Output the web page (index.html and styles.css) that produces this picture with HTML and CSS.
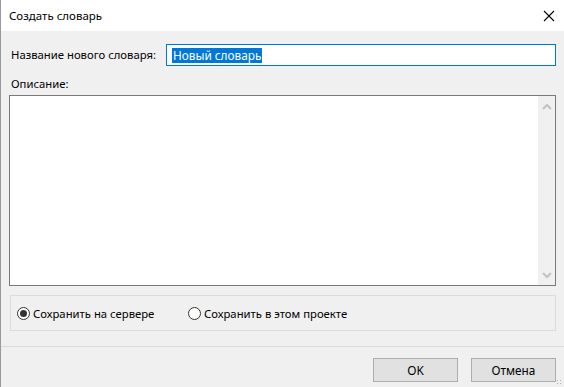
FILE: index.html
```html
<!DOCTYPE html>
<html lang="ru">
<head>
    <meta charset="UTF-8">
    <title>Создать словарь</title>
    <link rel="stylesheet" href="styles.css">
</head>
<body>
    <div class="window">
        <div class="titlebar">
            <span class="title">Создать словарь</span>
            <svg class="close" width="12" height="12" viewBox="0 0 12 12">
                <path d="M1 1 L11 11 M11 1 L1 11" stroke="#000" stroke-width="1.1" fill="none"/>
            </svg>
        </div>

        <div class="content">
            <div class="name-row">
                <label class="label">Название нового словаря:</label>
                <div class="input"><span class="selected">Новый словарь</span></div>
            </div>

            <div class="label desc-label">Описание:</div>
            <div class="textarea">
                <div class="scrollbar">
                    <svg width="10" height="7" viewBox="0 0 10 7">
                        <path d="M1 6 L5 2 L9 6" stroke="#c2c2c2" stroke-width="2" fill="none"/>
                    </svg>
                    <svg width="10" height="7" viewBox="0 0 10 7">
                        <path d="M1 1 L5 5 L9 1" stroke="#c2c2c2" stroke-width="2" fill="none"/>
                    </svg>
                </div>
            </div>

            <div class="group">
                <div class="radio-item first">
                    <span class="radio checked"></span>
                    <span>Сохранить на сервере</span>
                </div>
                <div class="radio-item">
                    <span class="radio"></span>
                    <span>Сохранить в этом проекте</span>
                </div>
            </div>
        </div>

        <div class="footer">
            <button class="btn">OK</button>
            <button class="btn">Отмена</button>
            <span class="grip"></span>
        </div>
    </div>
</body>
</html>
```

FILE: styles.css
```css
body {
    margin: 0;
    font-family: 'Noto Sans', 'Open Sans', sans-serif;
    font-size: 11.3px;
    color: #000;
    background: #f0f0f0;
}

.window {
    width: 564px;
    height: 387px;
    box-sizing: border-box;
    border-left: 1px solid #9a9a9a;
    display: flex;
    flex-direction: column;
    overflow: hidden;
}

.titlebar {
    height: 31px;
    background: #fff;
    display: flex;
    align-items: center;
    justify-content: space-between;
    padding: 0 9px 0 8px;
    flex-shrink: 0;
}
.title {
    font-size: 11.5px;
}

.content {
    padding: 13px 8px 0 8px;
    border-bottom: 1px solid #dcdcdc;
    height: 316px;
    box-sizing: border-box;
}

.name-row {
    display: flex;
    align-items: center;
    height: 22px;
}
.label {
    padding-left: 2px;
    line-height: 16px;
}
.name-row .label {
    width: 155px;
}
.input {
    flex: 1;
    height: 22px;
    box-sizing: border-box;
    border: 1px solid #0078d7;
    background: #fff;
    display: flex;
    align-items: center;
    padding-left: 5px;
}
.selected {
    background: #0078d7;
    color: #fff;
    font-size: 11.8px;
    line-height: 15px;
    padding: 0 1px;
}

.desc-label {
    margin-top: 10px;
}
.textarea {
    margin-top: 3px;
    height: 191px;
    box-sizing: border-box;
    border: 1px solid #7a7a7a;
    background: #fff;
    display: flex;
    justify-content: flex-end;
}
.scrollbar {
    width: 17px;
    background: #f0f0f0;
    display: flex;
    flex-direction: column;
    justify-content: space-between;
    align-items: center;
    padding: 7px 0 6px;
}

.group {
    margin: 9px 0 0 1px;
    height: 36px;
    box-sizing: border-box;
    border: 1px solid #dcdcdc;
    display: flex;
    align-items: center;
    padding-left: 6px;
}
.radio-item {
    display: flex;
    align-items: center;
    gap: 3px;
}
.radio-item.first {
    width: 171px;
}
.radio {
    width: 13px;
    height: 13px;
    box-sizing: border-box;
    border: 1px solid #333;
    border-radius: 50%;
    background: #fff;
    display: flex;
    align-items: center;
    justify-content: center;
}
.radio.checked::after {
    content: "";
    width: 7px;
    height: 7px;
    border-radius: 50%;
    background: #333;
}

.footer {
    flex: 1;
    display: flex;
    justify-content: flex-end;
    align-items: flex-start;
    gap: 13px;
    padding: 11px 8px 0 0;
    position: relative;
}
.btn {
    width: 85px;
    height: 24px;
    border: 1px solid #adadad;
    background: #e1e1e1;
    font-family: inherit;
    font-size: 11.8px;
    padding: 0;
}
.grip {
    position: absolute;
    right: 2px;
    bottom: 2px;
    width: 6px;
    height: 6px;
    background: radial-gradient(circle, #b0b0b0 0.8px, transparent 1px) 0 0 / 3px 3px;
}
```
